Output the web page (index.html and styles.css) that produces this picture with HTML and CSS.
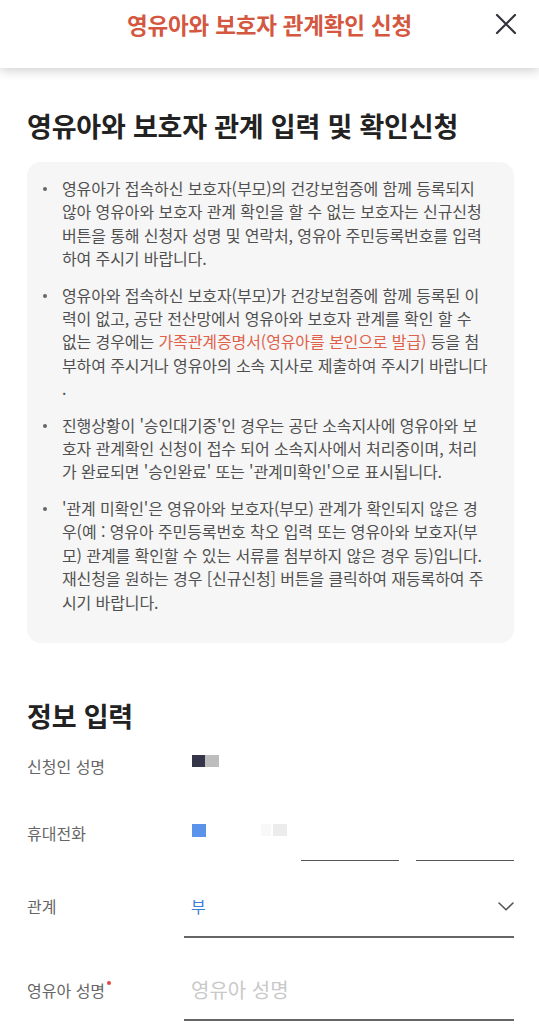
FILE: index.html
```html
<!DOCTYPE html>
<html lang="ko">
<head>
<meta charset="utf-8">
<title>영유아와 보호자 관계확인 신청</title>
<link rel="stylesheet" href="styles.css">
</head>
<body>
<header class="topbar">
  <div class="topbar-side"></div>
  <h1 class="topbar-title">영유아와 보호자 관계확인 신청</h1>
  <div class="topbar-side topbar-right">
    <button class="close-btn" aria-label="닫기">
      <svg width="22" height="22" viewBox="0 0 22 22"><path d="M2 2 L20 20 M20 2 L2 20" stroke="#33333f" stroke-width="2.2" stroke-linecap="round" fill="none"/></svg>
    </button>
  </div>
</header>

<main class="content">
  <h2 class="section-title first">영유아와 보호자 관계 입력 및 확인신청</h2>

  <div class="notice">
    <ul class="notice-list">
      <li>영유아가 접속하신 보호자(부모)의 건강보험증에 함께 등록되지<br>않아 영유아와 보호자 관계 확인을 할 수 없는 보호자는 신규신청<br>버튼을 통해 신청자 성명 및 연락처, 영유아 주민등록번호를 입력<br>하여 주시기 바랍니다.</li>
      <li>영유아와 접속하신 보호자(부모)가 건강보험증에 함께 등록된 이<br>력이 없고, 공단 전산망에서 영유아와 보호자 관계를 확인 할 수<br>없는 경우에는 <span class="em">가족관계증명서(영유아를 본인으로 발급)</span> 등을 첨<br>부하여 주시거나 영유아의 소속 지사로 제출하여 주시기 바랍니다<br>.</li>
      <li>진행상황이 '승인대기중'인 경우는 공단 소속지사에 영유아와 보<br>호자 관계확인 신청이 접수 되어 소속지사에서 처리중이며, 처리<br>가 완료되면 '승인완료' 또는 '관계미확인'으로 표시됩니다.</li>
      <li>'관계 미확인'은 영유아와 보호자(부모) 관계가 확인되지 않은 경<br>우(예 : 영유아 주민등록번호 착오 입력 또는 영유아와 보호자(부<br>모) 관계를 확인할 수 있는 서류를 첨부하지 않은 경우 등)입니다.<br>재신청을 원하는 경우 [신규신청] 버튼을 클릭하여 재등록하여 주<br>시기 바랍니다.</li>
    </ul>
  </div>

  <h2 class="section-title second">정보 입력</h2>

  <div class="form">
    <div class="row row-name">
      <div class="label">신청인 성명</div>
      <div class="field">
        <span class="mask mask-dark"></span><span class="mask mask-gray"></span>
      </div>
    </div>

    <div class="row row-phone">
      <div class="label">휴대전화</div>
      <div class="field phone">
        <div class="phone-first">
          <span class="mask mask-blue"></span>
          <span class="mask mask-faint"></span><span class="mask mask-light"></span>
        </div>
        <div class="phone-part"></div>
        <div class="phone-part"></div>
      </div>
    </div>

    <div class="row row-rel">
      <div class="label">관계</div>
      <div class="field select">
        <span class="select-value">부</span>
        <svg class="chevron" width="16" height="9" viewBox="0 0 16 9"><path d="M1 1 L8 7.8 L15 1" stroke="#555" stroke-width="1.6" fill="none" stroke-linecap="round" stroke-linejoin="round"/></svg>
      </div>
    </div>

    <div class="row row-child">
      <div class="label">영유아 성명<span class="req"></span></div>
      <div class="field input">
        <span class="placeholder">영유아 성명</span>
      </div>
    </div>
  </div>
</main>
</body>
</html>
```

FILE: styles.css
```css
* { box-sizing: border-box; }

html, body {
  margin: 0;
  padding: 0;
  background: #ffffff;
}

body {
  font-family: "Noto Sans CJK KR", "Noto Sans", sans-serif;
  color: #222;
}

/* Header */
.topbar {
  position: relative;
  z-index: 2;
  height: 68px;
  display: grid;
  grid-template-columns: 1fr auto 1fr;
  align-items: center;
  background: #fff;
  box-shadow: 0 3px 10px rgba(0, 0, 0, 0.18);
  padding-bottom: 20px;
}

.topbar-title {
  margin: 0;
  font-size: 22.5px;
  font-weight: 700;
  line-height: 28px;
  color: #d4573f;
  letter-spacing: -0.2px;
}

.topbar-right {
  display: flex;
  justify-content: flex-end;
  padding-right: 22px;
}

.close-btn {
  border: 0;
  background: none;
  padding: 0;
  width: 22px;
  height: 22px;
  display: block;
}
.close-btn svg { display: block; }

/* Content */
.content {
  padding: 0 25px 0 27px;
}

.section-title {
  margin: 0;
  font-size: 27px;
  font-weight: 700;
  line-height: 36px;
  color: #222;
  letter-spacing: -0.2px;
}
.section-title.first { margin-top: 40px; }
.section-title.second { margin-top: 55px; }

.notice {
  margin-top: 18px;
  background: #f6f6f6;
  border-radius: 14px;
  padding: 15px 8px 29px 35px;
}

.notice-list {
  list-style: none;
  margin: 0;
  padding: 0;
}

.notice-list li {
  position: relative;
  font-size: 16px;
  line-height: 23.4px;
  color: #505050;
  white-space: nowrap;
  margin-bottom: 13px;
  letter-spacing: -0.1px;
}
.notice-list li:last-child { margin-bottom: 0; }

.notice-list li::before {
  content: "";
  position: absolute;
  left: -19px;
  top: 10px;
  width: 4px;
  height: 4px;
  border-radius: 50%;
  background: #666;
}

.notice-list .em { color: #e0604a; }

/* Form */
.form {
  display: flex;
  flex-direction: column;
}

.row {
  display: grid;
  grid-template-columns: 157px 1fr;
  align-items: start;
}

.label {
  font-size: 16px;
  line-height: 22px;
  color: #666;
}

.row-name { margin-top: 21px; }
.row-phone { margin-top: 45px; }
.row-rel { margin-top: 33px; }
.row-child { margin-top: 38px; }

.row-rel .label { line-height: 24px; }
.row-child .label { line-height: 28px; }

.mask {
  display: inline-block;
  height: 12px;
  vertical-align: top;
}
.mask-dark { width: 13px; background: #35354a; margin-left: 8px; }
.mask-gray { width: 14px; background: #bdbdbd; }

.field { display: flex; }

.phone { align-items: flex-start; }
.phone-first {
  width: 117px;
  height: 39px;
  display: flex;
  align-items: flex-start;
  padding-top: 2px;
}
.mask-blue { width: 14px; height: 13px; background: #5b93ea; margin-left: 8px; }
.mask-faint { width: 10px; height: 12px; background: #f8f8f8; margin-left: 55px; }
.mask-light { width: 14px; height: 12px; background: #ececec; margin-left: 2px; }

.phone-part {
  width: 98px;
  height: 39px;
  border-bottom: 1.5px solid #555;
}
.phone-part + .phone-part { margin-left: 17px; }

.select,
.input {
  border-bottom: 2px solid #666;
  align-items: center;
  justify-content: space-between;
  padding-left: 7px;
  padding-right: 0;
}
.select { padding-bottom: 18px; }
.input { padding-bottom: 15px; }

.select-value {
  font-size: 16px;
  line-height: 24px;
  color: #3c7bd6;
}

.chevron { display: block; margin-top: 2px; }

.placeholder {
  font-size: 20px;
  line-height: 28px;
  color: #c9c9c9;
}

.req {
  display: inline-block;
  width: 4px;
  height: 4px;
  border-radius: 50%;
  background: #e0483a;
  vertical-align: top;
  margin-top: 5px;
  margin-left: 2px;
}
```
